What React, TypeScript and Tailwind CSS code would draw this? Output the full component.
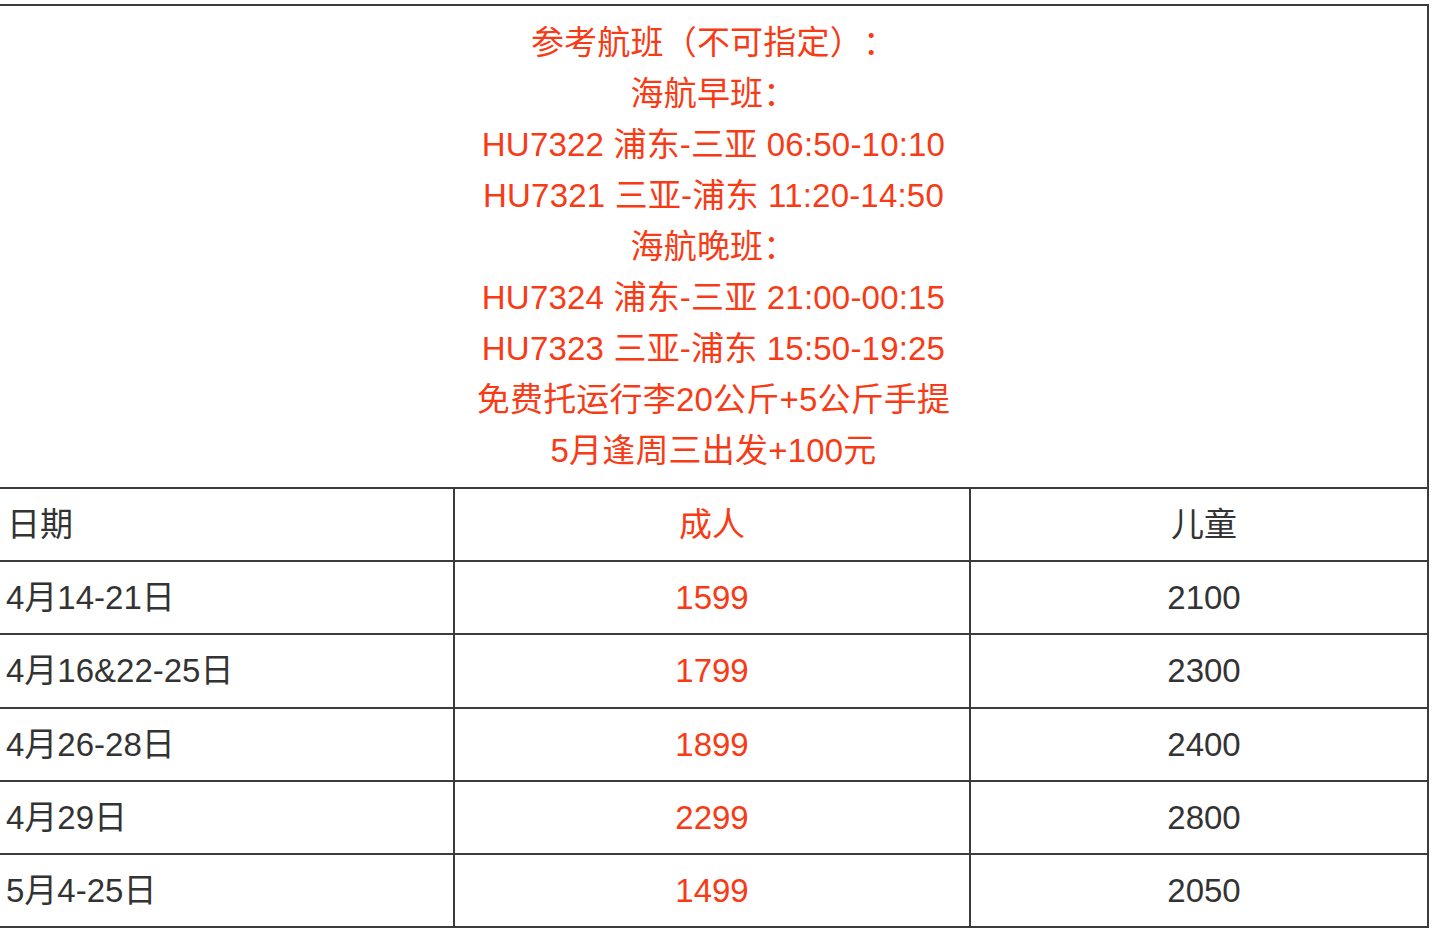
import React from 'react';

const notes = [
  '参考航班（不可指定）：',
  '海航早班：',
  'HU7322 浦东-三亚 06:50-10:10',
  'HU7321 三亚-浦东 11:20-14:50',
  '海航晚班：',
  'HU7324 浦东-三亚 21:00-00:15',
  'HU7323 三亚-浦东 15:50-19:25',
  '免费托运行李20公斤+5公斤手提',
  '5月逢周三出发+100元',
];

const rows = [
  { date: '4月14-21日', adult: '1599', child: '2100', h: 'h-[71px]' },
  { date: '4月16&22-25日', adult: '1799', child: '2300', h: 'h-[72px]' },
  { date: '4月26-28日', adult: '1899', child: '2400', h: 'h-[71px]' },
  { date: '4月29日', adult: '2299', child: '2800', h: 'h-[71px]' },
  { date: '5月4-25日', adult: '1499', child: '2050', h: 'h-[71px]' },
];

export default function App() {
  return (
    <div className="min-h-screen bg-white pt-1 text-[33px] text-[#333333] [text-spacing-trim:space-all] font-['Liberation_Sans','Noto_Sans_CJK_SC',sans-serif]">
      <div className="w-[1429px] border-t-2 border-r-2 border-[#3b3b3b]">
        {/* Notes */}
        <div className="h-[481px] flex flex-col items-center justify-center text-[#f73b16] leading-[51px] tracking-[0.2px]">
          {notes.map((line) => (
            <p key={line}>{line}</p>
          ))}
        </div>

        {/* Price table */}
        <div className="grid grid-cols-[453px_516px_458px] border-t-2 border-[#3b3b3b]">
          <div className="h-[71px] flex items-center pl-[7px]">日期</div>
          <div className="h-[71px] flex items-center justify-center border-l-2 border-[#3b3b3b] text-[#f73b16]">成人</div>
          <div className="h-[71px] flex items-center justify-center border-l-2 border-[#3b3b3b] pl-[10px]">儿童</div>
        </div>
        {rows.map((r) => (
          <div key={r.date} className="grid grid-cols-[453px_516px_458px] border-t-2 border-[#3b3b3b]">
            <div className={`${r.h} flex items-center pl-[6px]`}>{r.date}</div>
            <div className={`${r.h} flex items-center justify-center border-l-2 border-[#3b3b3b] text-[#f73b16]`}>{r.adult}</div>
            <div className={`${r.h} flex items-center justify-center border-l-2 border-[#3b3b3b] pl-[10px]`}>{r.child}</div>
          </div>
        ))}
        <div className="border-t-2 border-[#3b3b3b]" />
      </div>
    </div>
  );
}
